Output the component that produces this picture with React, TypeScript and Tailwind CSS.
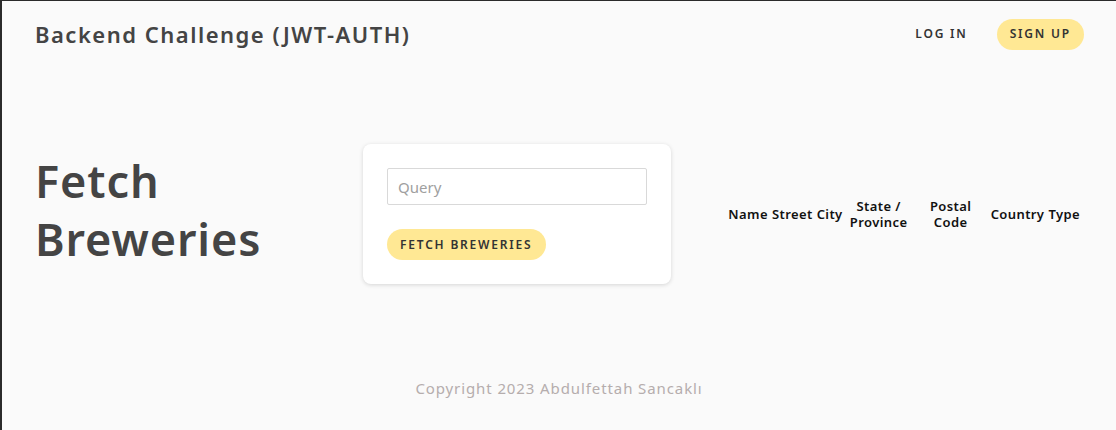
import { useState } from "react";

const font = { fontFamily: '"Noto Sans", "Open Sans", Lato, sans-serif' };

export default function App() {
  const [query, setQuery] = useState("");

  return (
    <div
      className="flex h-[430px] w-full flex-col border-l-2 border-t border-[#2b2b2b] bg-[#fafafa] text-[#444]"
      style={font}
    >
      {/* Header */}
      <header className="flex h-[66px] items-center justify-between pl-[33px] pr-[32px]">
        <h1 className="text-[22px] font-semibold tracking-[1.5px] text-[#444]">
          Backend Challenge (JWT-AUTH)
        </h1>
        <nav className="flex items-center gap-[16px]">
          <button className="h-[31px] rounded-full px-[13px] text-[12px] font-semibold tracking-[1.8px] text-[#333]">
            LOG IN
          </button>
          <button className="h-[31px] rounded-full bg-[#ffe894] px-[13px] text-[12px] font-semibold tracking-[1.8px] text-[#333]">
            SIGN UP
          </button>
        </nav>
      </header>

      {/* Main */}
      <main className="flex items-center pl-[33px] pr-[34px] pt-[77px]">
        <h2 className="w-[328px] pb-[8px] text-[45px] font-semibold leading-[58px] tracking-[0.9px] text-[#444]">
          Fetch
          <br />
          Breweries
        </h2>

        <div className="w-[308px] rounded-lg bg-white p-6 shadow-[0_1px_4px_rgba(0,0,0,0.15)]">
          <input
            className="h-[37px] w-[260px] rounded-[2px] border border-[#d9d9d9] px-[10px] text-[15px] text-[#444] outline-none placeholder:text-[#a0a0a0]"
            placeholder="Query"
            value={query}
            onChange={(e) => setQuery(e.target.value)}
          />
          <button className="mt-6 h-[31px] rounded-full bg-[#ffe894] px-[13px] text-[12px] font-semibold tracking-[1.8px] text-[#333]">
            FETCH BREWERIES
          </button>
        </div>

        <div className="flex flex-1 justify-end">
          <table className="text-[13px] leading-[16px] tracking-[0.4px] text-[#111]">
            <thead>
              <tr>
                <th className="px-[2px] font-semibold">Name</th>
                <th className="px-[2px] font-semibold">Street</th>
                <th className="px-[2px] font-semibold">City</th>
                <th className="w-[68px] px-[2px] font-semibold">
                  State /
                  <br />
                  Province
                </th>
                <th className="w-[76px] px-[2px] font-semibold">
                  Postal
                  <br />
                  Code
                </th>
                <th className="px-[2px] font-semibold">Country</th>
                <th className="px-[2px] font-semibold">Type</th>
              </tr>
            </thead>
          </table>
        </div>
      </main>

      {/* Footer */}
      <footer className="mt-[93px] text-center text-[15px] tracking-[0.9px] text-[#b5adad]">
        Copyright 2023 Abdulfettah Sancaklı
      </footer>
    </div>
  );
}
